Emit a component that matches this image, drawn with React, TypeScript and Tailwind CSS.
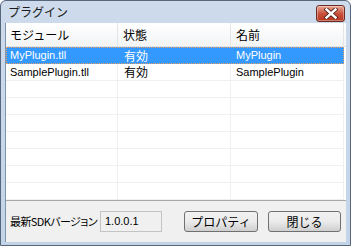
import React from "react";

const rows = [
  { m: "MyPlugin.tll", s: "有効", n: "MyPlugin", sel: true },
  { m: "SamplePlugin.tll", s: "有効", n: "SamplePlugin", sel: false },
];

export default function App() {
  const empty = Array.from({ length: 7 });
  return (
    <div
      className="w-[351px] h-[246px] flex flex-col border border-[#56677c] rounded-t-[6px] bg-gradient-to-b from-[#cddbec] to-[#c3d4e9] text-black"
      style={{ fontFamily: '"Liberation Sans","Noto Sans CJK JP",sans-serif' }}
    >
      <div className="h-[22px] flex items-center justify-between pl-[7px] pr-[5px]">
        <span className="text-[12px] leading-none text-[#1a1a1a]" style={{ fontFamily: '"Noto Sans CJK JP",sans-serif' }}>
          プラグイン
        </span>
        <div className="w-[29px] h-[17px] mt-[3px] rounded-[3px] border border-[#6d2c22] bg-gradient-to-b from-[#e9a796] via-[#c9523d] to-[#b8361f] flex items-center justify-center shadow-[inset_0_0_0_1px_rgba(255,255,255,0.35)]">
          <svg width="14" height="11" viewBox="0 0 14 11">
            <path d="M2.5 1.5 L11.5 9.5 M11.5 1.5 L2.5 9.5" stroke="#4a1a12" strokeWidth="4.2" strokeLinecap="square" />
            <path d="M2.5 1.5 L11.5 9.5 M11.5 1.5 L2.5 9.5" stroke="#ffffff" strokeWidth="2.5" strokeLinecap="square" />
          </svg>
        </div>
      </div>
      <div className="flex-1 mx-[4px] mb-[3px] bg-[#f0f0f0] flex flex-col border-l border-[#7f93ab]">
        <div className="h-[178px] bg-white border-b border-[#a7a7a7] flex flex-col overflow-hidden">
          <div className="h-[25px] flex border-b border-[#e3e3e3] bg-gradient-to-b from-white to-[#f3f4f6] text-[12px]" style={{ fontFamily: '"Noto Sans CJK JP",sans-serif' }}>
            <div className="w-[112px] border-r border-[#e3e5e8] pl-[4px] flex items-center">モジュール</div>
            <div className="w-[113px] border-r border-[#e3e5e8] pl-[5px] flex items-center">状態</div>
            <div className="w-[113px] border-r border-[#e3e5e8] pl-[5px] flex items-center">名前</div>
            <div className="flex-1" />
          </div>
          {rows.map((r, i) => (
            <div key={i} className="h-[17px] flex shrink-0">
              <div
                className={
                  "flex w-[338px] " +
                  (r.sel
                    ? "bg-[#3399ff] text-white outline-1 outline-dotted outline-[#e8a060] -outline-offset-1"
                    : "border-b border-[#f0f0f0]")
                }
              >
                <div className={"w-[112px] pl-[4px] flex items-center text-[11px] " + (r.sel ? "" : "border-r border-[#f0f0f0]")}>{r.m}</div>
                <div
                  className={"w-[113px] pl-[6px] flex items-center text-[12px] " + (r.sel ? "" : "border-r border-[#f0f0f0]")}
                  style={{ fontFamily: '"Noto Sans CJK JP",sans-serif' }}
                >
                  {r.s}
                </div>
                <div className={"w-[113px] pl-[5px] flex items-center text-[11px] " + (r.sel ? "" : "border-r border-[#f0f0f0]")}>{r.n}</div>
              </div>
            </div>
          ))}
          {empty.map((_, i) => (
            <div key={i} className="h-[17px] flex shrink-0">
              <div className="flex w-[338px] border-b border-[#f0f0f0]">
                <div className="w-[112px] border-r border-[#f0f0f0]" />
                <div className="w-[113px] border-r border-[#f0f0f0]" />
                <div className="w-[113px] border-r border-[#f0f0f0]" />
              </div>
            </div>
          ))}
        </div>
        <div className="flex-1 flex items-center pl-[4px] pr-[5px] text-[12px]">
          <span
            className="whitespace-nowrap text-[11px] tracking-[-0.6px] w-[88px] overflow-hidden"
            style={{ fontFamily: '"Noto Sans CJK JP",sans-serif', fontFeatureSettings: '"palt"' }}
          >
            最新SDKバージョン
          </span>
          <div className="ml-[2px] w-[62px] h-[21px] border border-[#c4c4c4] bg-[#f0f0f0] flex items-center pl-[4px] text-[11px]">
            1.0.0.1
          </div>
          <div className="ml-auto flex gap-[10px]">
            <button className="w-[74px] h-[21px] rounded-[3px] border border-[#707070] bg-gradient-to-b from-[#f2f2f2] via-[#ebebeb] to-[#cfcfcf] text-[12px] flex items-center justify-center" style={{ fontFamily: '"Noto Sans CJK JP",sans-serif' }}>
              プロパティ
            </button>
            <button className="w-[73px] h-[21px] rounded-[3px] border border-[#707070] bg-gradient-to-b from-[#f2f2f2] via-[#ebebeb] to-[#cfcfcf] text-[12px] flex items-center justify-center" style={{ fontFamily: '"Noto Sans CJK JP",sans-serif' }}>
              閉じる
            </button>
          </div>
        </div>
      </div>
    </div>
  );
}
